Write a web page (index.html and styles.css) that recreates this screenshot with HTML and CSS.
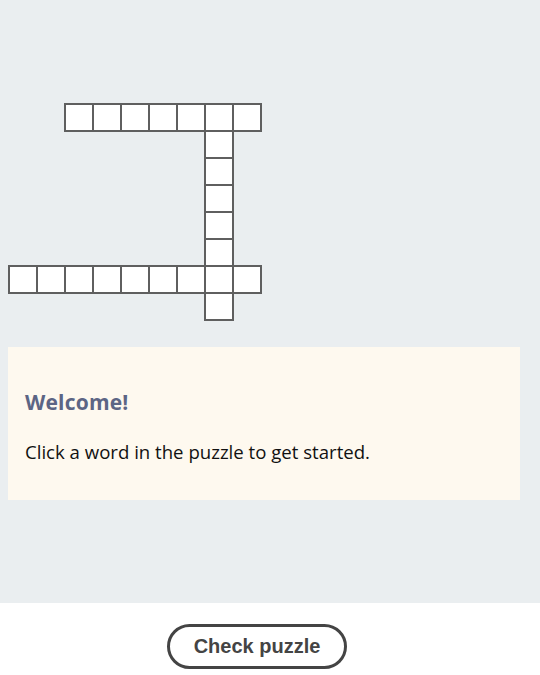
FILE: index.html
```html
<!DOCTYPE html>
<html>
<head>
<meta charset="utf-8">
<link rel="stylesheet" href="styles.css">
</head>
<body>
<main class="stage">
  <div class="grid">
    <div class="cell" style="grid-column:3;grid-row:1"></div>
    <div class="cell" style="grid-column:4;grid-row:1"></div>
    <div class="cell" style="grid-column:5;grid-row:1"></div>
    <div class="cell" style="grid-column:6;grid-row:1"></div>
    <div class="cell" style="grid-column:7;grid-row:1"></div>
    <div class="cell" style="grid-column:8;grid-row:1"></div>
    <div class="cell" style="grid-column:9;grid-row:1"></div>
    <div class="cell" style="grid-column:8;grid-row:2"></div>
    <div class="cell" style="grid-column:8;grid-row:3"></div>
    <div class="cell" style="grid-column:8;grid-row:4"></div>
    <div class="cell" style="grid-column:8;grid-row:5"></div>
    <div class="cell" style="grid-column:8;grid-row:6"></div>
    <div class="cell" style="grid-column:1;grid-row:7"></div>
    <div class="cell" style="grid-column:2;grid-row:7"></div>
    <div class="cell" style="grid-column:3;grid-row:7"></div>
    <div class="cell" style="grid-column:4;grid-row:7"></div>
    <div class="cell" style="grid-column:5;grid-row:7"></div>
    <div class="cell" style="grid-column:6;grid-row:7"></div>
    <div class="cell" style="grid-column:7;grid-row:7"></div>
    <div class="cell" style="grid-column:8;grid-row:7"></div>
    <div class="cell" style="grid-column:9;grid-row:7"></div>
    <div class="cell" style="grid-column:8;grid-row:8"></div>
  </div>
  <section class="clue-box">
    <h2 class="clue-title">Welcome!</h2>
    <p class="clue-text">Click a word in the puzzle to get started.</p>
  </section>
</main>
<footer class="footer">
  <button class="check-btn">Check puzzle</button>
</footer>
</body>
</html>
```
FILE: styles.css
```css
html, body {
  margin: 0;
  padding: 0;
  background: #ffffff;
}
.stage {
  background: #eaeef0;
  height: 603px;
  padding: 103px 20px 0 8px;
  box-sizing: border-box;
  display: flex;
  flex-direction: column;
}
.grid {
  display: grid;
  grid-template-columns: repeat(9, 28px);
  grid-template-rows: repeat(8, 27px);
  width: 254px;
  height: 219px;
}
.cell {
  width: 30px;
  height: 29px;
  box-sizing: border-box;
  border: 2px solid #5f5f5f;
  background: #ffffff;
}
.clue-box {
  margin-top: 25px;
  background: #fef9ef;
  height: 153px;
  padding: 40px 17px 0 17px;
  box-sizing: border-box;
  font-family: "Open Sans", "Noto Sans", sans-serif;
}
.clue-title {
  margin: 0;
  font-size: 21px;
  font-weight: 700;
  color: #5c6584;
  line-height: 30px;
  letter-spacing: 0.2px;
}
.clue-text {
  margin: 22px 0 0 0;
  font-size: 18.6px;
  color: #111111;
  line-height: 26px;
}
.footer {
  height: 72px;
  display: flex;
  align-items: center;
  justify-content: center;
  padding-right: 26px;
}
.check-btn {
  width: 180px;
  height: 45px;
  margin-top: 14px;
  border: 3px solid #444444;
  border-radius: 23px;
  background: #ffffff;
  color: #444444;
  font-family: "Liberation Sans", Arial, sans-serif;
  font-weight: 700;
  font-size: 20px;
}
```
